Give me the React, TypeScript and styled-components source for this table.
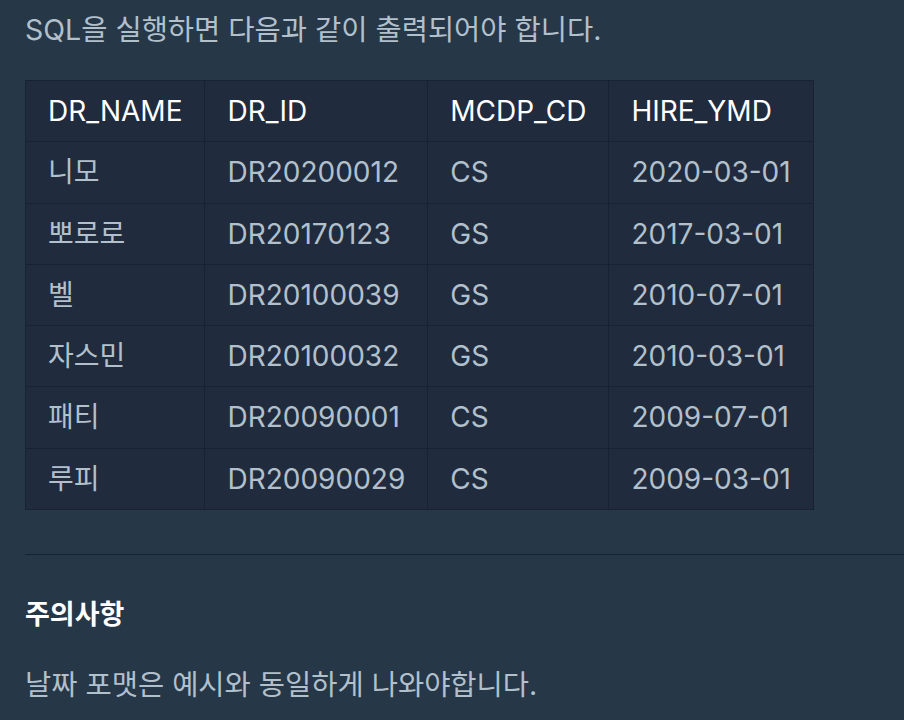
import React from "react";
import styled, { createGlobalStyle } from "styled-components";

const GlobalStyle = createGlobalStyle`
  html, body {
    margin: 0;
    padding: 0;
    background: #263747;
  }
  body {
    font-family: Inter, "Noto Sans CJK KR", sans-serif;
    -webkit-font-smoothing: antialiased;
  }
`;

const Page = styled.div`
  padding: 10px 0 0 25px;
  color: #b2c0cc;
`;

const Paragraph = styled.p`
  margin: 0;
  font-size: 28.5px;
  line-height: 40px;
  color: #b2c0cc;
`;

const Table = styled.table`
  margin-top: 30px;
  border-collapse: collapse;
  background: #202b3d;
  border: 1px solid #172334;
`;

const Cell = styled.td<{ $head?: boolean }>`
  border: 1px solid #172334;
  padding: 11px 22px;
  font-size: 28px;
  line-height: 38.3px;
  text-align: left;
  white-space: nowrap;
  font-weight: 400;
  color: ${(p) => (p.$head ? "#ffffff" : "#b2c0cc")};
`;

const Divider = styled.hr`
  margin: 44px 0 0 0;
  border: none;
  border-top: 1px solid #172334;
`;

const Heading = styled.h5`
  margin: 40px 0 0 0;
  font-size: 27px;
  line-height: 40px;
  font-weight: 700;
  color: #ffffff;
`;

const Note = styled(Paragraph)`
  margin-top: 30px;
`;

const headers = ["DR_NAME", "DR_ID", "MCDP_CD", "HIRE_YMD"];
const rows = [
  ["니모", "DR20200012", "CS", "2020-03-01"],
  ["뽀로로", "DR20170123", "GS", "2017-03-01"],
  ["벨", "DR20100039", "GS", "2010-07-01"],
  ["자스민", "DR20100032", "GS", "2010-03-01"],
  ["패티", "DR20090001", "CS", "2009-07-01"],
  ["루피", "DR20090029", "CS", "2009-03-01"],
];

export default function App() {
  return (
    <>
      <GlobalStyle />
      <Page>
        <Paragraph>SQL을 실행하면 다음과 같이 출력되어야 합니다.</Paragraph>
        <Table>
          <thead>
            <tr>
              {headers.map((h) => (
                <Cell as="th" $head key={h}>
                  {h}
                </Cell>
              ))}
            </tr>
          </thead>
          <tbody>
            {rows.map((r) => (
              <tr key={r[1]}>
                {r.map((c, i) => (
                  <Cell key={i}>{c}</Cell>
                ))}
              </tr>
            ))}
          </tbody>
        </Table>
        <Divider />
        <Heading>주의사항</Heading>
        <Note>날짜 포맷은 예시와 동일하게 나와야합니다.</Note>
      </Page>
    </>
  );
}
